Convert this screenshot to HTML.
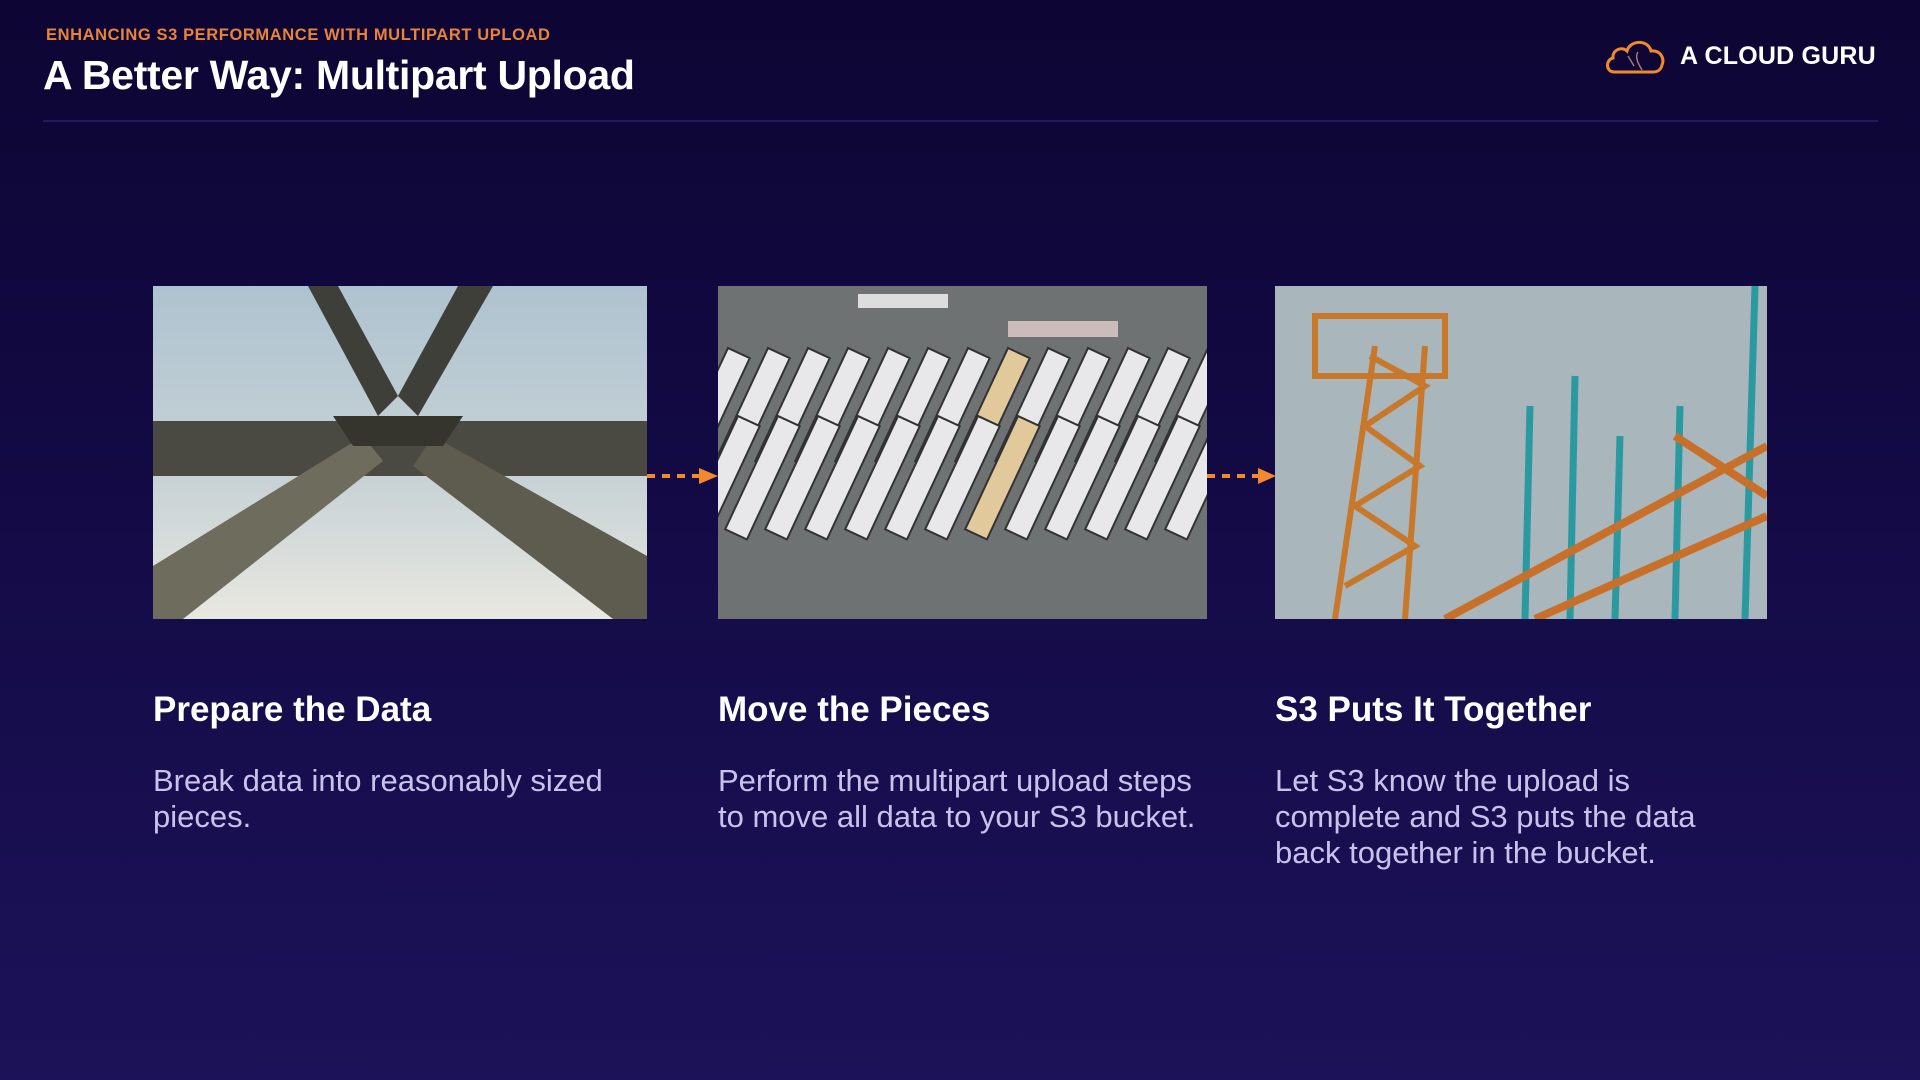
<!DOCTYPE html>
<html><head><meta charset="utf-8"><style>
*{margin:0;padding:0;box-sizing:border-box}
body{width:1920px;height:1080px;overflow:hidden;font-family:"Liberation Sans",sans-serif;background:linear-gradient(180deg,#0d0533 0%,#130a45 45%,#1c1259 100%);position:relative;color:#fff}
.sub{position:absolute;left:46px;top:26px;font-size:16.5px;font-weight:bold;color:#e8833a;letter-spacing:0.6px}
.title{position:absolute;left:43px;top:52px;font-size:41px;font-weight:bold;letter-spacing:-0.3px}
.line{position:absolute;left:43px;top:120px;width:1835px;height:2px;background:#24195a}
.logo{position:absolute;left:1604px;top:36px;display:flex;align-items:center}
.logo span{font-size:25px;font-weight:bold;margin-left:14px;letter-spacing:0.2px}
.img{position:absolute;top:286px;height:333px;overflow:hidden}
h2{position:absolute;top:690px;font-size:35px;font-weight:bold;letter-spacing:0px}
p{position:absolute;top:763px;font-size:31px;line-height:36px;color:#c9c3ec}
.arrow{position:absolute;top:468px}
</style></head><body>
<div class="sub">ENHANCING S3 PERFORMANCE WITH MULTIPART UPLOAD</div>
<div class="title">A Better Way: Multipart Upload</div>
<div class="line"></div>
<div class="logo">
<svg width="62" height="40" viewBox="0 0 62 40"><path d="M10 36 C2 36 1 24 9 22 C8 14 18 10 23 15 C26 4 44 3 47 15 C56 14 61 22 58 29 C57 34 53 36 49 36 Z" fill="none" stroke="#f08a2c" stroke-width="3"/><path d="M24 20 L30 30 M34 16 C30 22 36 30 38 34" stroke="#aa7a6a" stroke-width="1.5" fill="none"/></svg>
<span>A CLOUD GURU</span></div>

<div class="img" style="left:153px;width:494px">
<svg width="494" height="333" viewBox="0 0 494 333"><defs><linearGradient id="s1" x1="0" y1="0" x2="0" y2="1"><stop offset="0" stop-color="#aec3d0"/><stop offset="0.6" stop-color="#c9d3d6"/><stop offset="1" stop-color="#e8e8e0"/></linearGradient></defs>
<rect width="494" height="333" fill="url(#s1)"/>
<polygon points="155,0 185,0 245,110 225,130" fill="#3e3f38"/>
<polygon points="305,0 340,0 265,130 245,110" fill="#3e3f38"/>
<rect x="0" y="135" width="494" height="55" fill="#4a4a42"/>
<polygon points="0,280 0,333 30,333 230,175 210,150" fill="#6e6c5c"/>
<polygon points="494,270 494,333 460,333 260,180 280,150" fill="#5e5c4e"/>
<polygon points="180,130 310,130 290,160 200,160" fill="#35352e"/>
</svg></div>

<div class="img" style="left:718px;width:489px;background:#6d6f6f">
<svg width="489" height="333" viewBox="0 0 489 333"><rect width="489" height="333" fill="#6f7272"/>
<rect x="140" y="8" width="90" height="14" fill="#ddd"/><rect x="290" y="35" width="110" height="16" fill="#cbb"/>
<g transform="translate(0,62)"><g id="row">
<g fill="#e8e8ea" stroke="#333" stroke-width="2">
<rect x="10" y="0" width="24" height="125" transform="rotate(25 10 0)"/>
<rect x="50" y="0" width="24" height="125" transform="rotate(25 50 0)"/>
<rect x="90" y="0" width="24" height="125" transform="rotate(25 90 0)"/>
<rect x="130" y="0" width="24" height="125" transform="rotate(25 130 0)"/>
<rect x="170" y="0" width="24" height="125" transform="rotate(25 170 0)"/>
<rect x="210" y="0" width="24" height="125" transform="rotate(25 210 0)"/>
<rect x="250" y="0" width="24" height="125" transform="rotate(25 250 0)"/>
<rect x="290" y="0" width="24" height="125" transform="rotate(25 290 0)" fill="#e2c99c"/>
<rect x="330" y="0" width="24" height="125" transform="rotate(25 330 0)"/>
<rect x="370" y="0" width="24" height="125" transform="rotate(25 370 0)"/>
<rect x="410" y="0" width="24" height="125" transform="rotate(25 410 0)"/>
<rect x="450" y="0" width="24" height="125" transform="rotate(25 450 0)"/>
<rect x="490" y="0" width="24" height="125" transform="rotate(25 490 0)"/>
</g></g></g>
<use href="#row" x="10" y="130"/>
</svg></div>

<div class="img" style="left:1275px;width:492px">
<svg width="492" height="333" viewBox="0 0 492 333"><rect width="492" height="333" fill="#a9b6bb"/>
<g stroke="#c8782a" stroke-width="6" fill="none">
<line x1="60" y1="333" x2="100" y2="60"/><line x1="130" y1="333" x2="150" y2="60"/>
<path d="M70 300 L140 260 L80 220 L145 180 L90 140 L150 100 L95 70"/>
<rect x="40" y="30" width="130" height="60"/>
</g>
<g stroke="#2a9aa0" stroke-width="7">
<line x1="250" y1="333" x2="255" y2="120"/><line x1="295" y1="333" x2="300" y2="90"/><line x1="340" y1="333" x2="345" y2="150"/><line x1="400" y1="333" x2="405" y2="120"/><line x1="470" y1="333" x2="480" y2="0"/>
</g>
<g stroke="#c8702a" stroke-width="8"><line x1="170" y1="333" x2="492" y2="160"/><line x1="260" y1="333" x2="492" y2="230"/><line x1="400" y1="150" x2="492" y2="210"/></g>
</svg></div>

<svg class="arrow" style="left:647px" width="72" height="16" viewBox="0 0 72 16"><line x1="0" y1="8" x2="52" y2="8" stroke="#f08a2c" stroke-width="4" stroke-dasharray="8 7"/><polygon points="52,0 71,8 52,16" fill="#f08a2c"/></svg>
<svg class="arrow" style="left:1207px" width="70" height="16" viewBox="0 0 70 16"><line x1="0" y1="8" x2="51" y2="8" stroke="#f08a2c" stroke-width="4" stroke-dasharray="8 7"/><polygon points="51,0 69,8 51,16" fill="#f08a2c"/></svg>

<h2 style="left:153px">Prepare the Data</h2>
<h2 style="left:718px">Move the Pieces</h2>
<h2 style="left:1275px">S3 Puts It Together</h2>
<p style="left:153px;width:560px">Break data into reasonably sized<br>pieces.</p>
<p style="left:718px;width:560px">Perform the multipart upload steps<br>to move all data to your S3 bucket.</p>
<p style="left:1275px;width:560px">Let S3 know the upload is<br>complete and S3 puts the data<br>back together in the bucket.</p>
</body></html>
